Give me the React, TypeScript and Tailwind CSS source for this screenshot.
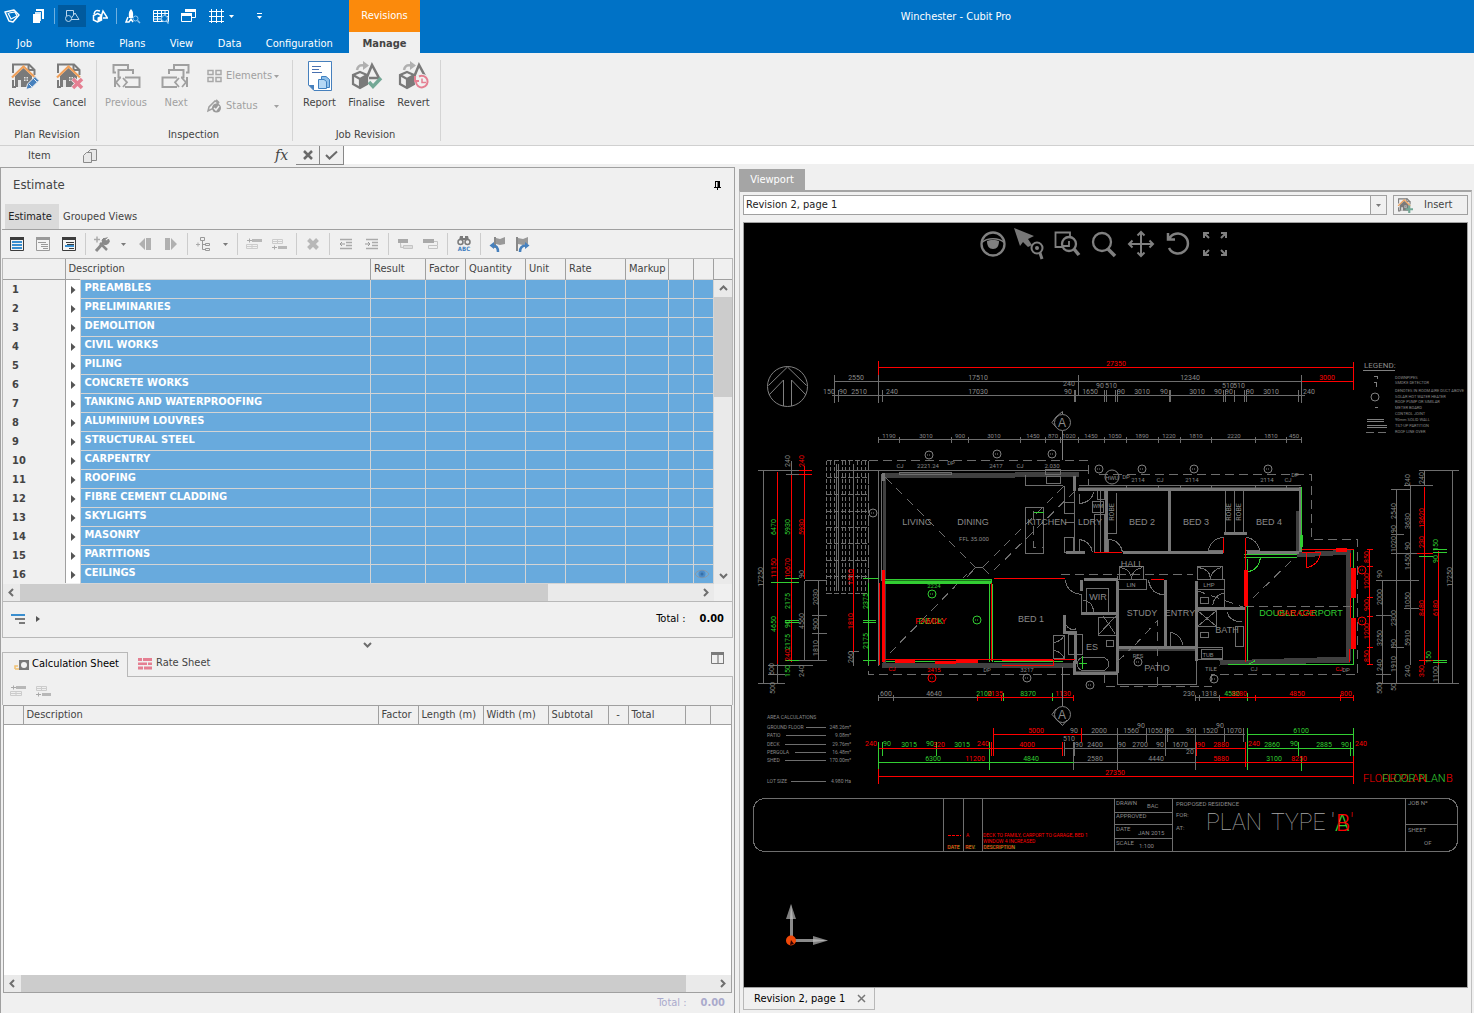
import { Fragment, type ReactNode } from 'react';

const G = '#7a7a7a';
const B = '#3a8fd0';

type IconProps = { w?: number; h?: number; children: ReactNode };

function Icon({ w = 16, h = 16, children }: IconProps) {
  return (
    <svg width={w} height={h} viewBox={`0 0 ${w} ${h}`} fill="none" aria-hidden="true">
      {children}
    </svg>
  );
}

function Caret({ color = G }: { color?: string }) {
  return (
    <Icon w={5} h={3}>
      <path d="M0 0H5L2.500 3Z" fill={color} />
    </Icon>
  );
}

function Chevron({ dir, color = '#6e6e6e' }: { dir: 'up' | 'down' | 'left' | 'right'; color?: string }) {
  const d = {
    up: 'M1 6L4.5 2.5L8 6',
    down: 'M1 3L4.5 6.5L8 3',
    left: 'M6 1L2.5 4.5L6 8',
    right: 'M3 1L6.5 4.5L3 8',
  }[dir];
  return (
    <Icon w={9} h={9}>
      <path d={d} stroke={color} strokeWidth="2" />
    </Icon>
  );
}

/* ---------- ribbon icons ---------- */

function HousePage({ size = 30, children }: { size?: number; children?: ReactNode }) {
  return (
    <svg width={size} height={size} viewBox="0 0 30 30" fill="none" aria-hidden="true">
      <path d="M3 12V3.500H19L24.500 9V14M3 19V26H6" stroke={G} strokeWidth="2" />
      <path d="M18.500 3V9H25" stroke={G} strokeWidth="2" />
      <path d="M5 15L13.500 7L22 15V26H5Z" fill={G} />
      <path d="M8 19H11V26H8ZM14 16H18V20H14Z" fill="#e4e4e4" />
      <path d="M16 16V20M14 18H18" stroke={G} />
      <path d="M2 16.500L13.500 5.500L25 16.500" stroke="#f0a05a" strokeWidth="2.200" />
      {children}
    </svg>
  );
}

function ReviseIcon() {
  return (
    <HousePage>
      <path d="M16 28.500L17.500 23L25 15.500L29 19.500L21.500 27Z" fill="#4680bd" stroke="#f0f0f0" />
      <path d="M19 23L22 26M23.500 17.500L27 21" stroke="#dfe8f2" />
    </HousePage>
  );
}

function CancelIcon() {
  return (
    <HousePage>
      <path d="M18 18L27 27M27 18L18 27" stroke="#f0f0f0" strokeWidth="5" />
      <path d="M18 18L27 27M27 18L18 27" stroke="#e57f92" strokeWidth="3.500" />
    </HousePage>
  );
}

function StepIcon({ flip }: { flip?: boolean }) {
  return (
    <Icon w={30} h={30}>
      <g transform={flip ? 'matrix(-1 0 0 1 30 0)' : undefined} stroke="#a0a0a0" strokeWidth="2">
        <path d="M5 11.500H2.500V4H17V8" />
        <path d="M10 16.500H7.500V9H22V13" />
        <path d="M4 16V26M14 16.500H28.500V26H14" />
        <path d="M9 17L5 21.300L9 26M12 17L16 21.300L12 26" strokeWidth="1.800" />
      </g>
    </Icon>
  );
}

function ElementsIcon() {
  return (
    <Icon w={16} h={14}>
      <path d="M1 1.500H6V5.500H1ZM9 1.500H14V5.500H9ZM1 8.500H6V12.500H1ZM9 8.500H14V12.500H9Z" stroke="#a8a8a8" strokeWidth="1.500" />
    </Icon>
  );
}

function StatusIcon() {
  return (
    <Icon w={16} h={14}>
      <path d="M1 12L2 8L8 2L11 4L5 10Z" stroke="#a0a0a0" strokeWidth="1.500" />
      <circle cx="9.500" cy="9" r="4.500" fill="#999" />
      <path d="M7 9l2 2 3-4" stroke="#f0f0f0" strokeWidth="1.500" />
      <path d="M9 1l3 3" stroke="#a0a0a0" strokeWidth="2" />
    </Icon>
  );
}

function ReportIcon() {
  return (
    <Icon w={26} h={30}>
      <path d="M1.500 .5H24.500V29.500H7L1.500 24Z" fill="#fff" stroke="#4680bd" />
      <path d="M1.500 24H7V29.500Z" fill="#4680bd" />
      <path d="M5 5.500H14M5 8.500H12M5 11.500H15" stroke="#4870b0" />
      <path d="M14.500 15.500H19L22.500 18.500V26.500H14.500Z" fill="#8fc0ea" stroke="#3f80c0" />
      <path d="M11.500 18.500H17L19.500 20.500V27.500H11.500Z" fill="#b5d8f5" stroke="#3f80c0" />
    </Icon>
  );
}

function ShapesIcon({ children }: { children: ReactNode }) {
  return (
    <Icon w={32} h={30}>
      <path d="M6 9C7 4 10 4 13 4.500" stroke="#b0b0b0" strokeWidth="2.500" />
      <path d="M12 0L18 4.500L12 9Z" fill="#b0b0b0" />
      <path d="M16 16L21 4L28 17H18" stroke={G} strokeWidth="2.500" />
      <path d="M9 11L16 14V23L9 27L2 23V14Z" fill="#f0f0f0" stroke={G} strokeWidth="2.200" />
      <path d="M2 14L9 18L16 14M9 18V27" stroke={G} strokeWidth="2.200" />
      <path d="M9 18L16 14V23L9 27Z" fill={G} />
      {children}
    </Icon>
  );
}

function FinaliseIcon() {
  return (
    <ShapesIcon>
      <path d="M18 21L22 25.500L30 17" stroke="#73a896" strokeWidth="3.500" />
    </ShapesIcon>
  );
}

function RevertIcon() {
  return (
    <ShapesIcon>
      <circle cx="24" cy="20.500" r="7.500" fill="#f0f0f0" />
      <path d="M18 20.500A5.800 5.800 0 1 0 21 15.500M17 15V20H21" stroke="#e57f92" strokeWidth="2" />
      <path d="M24 17.500V21.500H28" stroke="#e57f92" strokeWidth="1.500" />
    </ShapesIcon>
  );
}

/* ---------- title bar icons ---------- */

function LogoIcon() {
  return (
    <Icon>
      <path d="M1 4L10 2L15 7L9 14L5 13L1 4Z" stroke="#fff" strokeWidth="1.500" strokeLinejoin="round" />
      <path d="M4 5L7 11L13 8M5 5L11 4L13 8" stroke="#fff" strokeWidth="1.200" />
    </Icon>
  );
}

function PagesIcon() {
  return (
    <Icon w={14} h={14}>
      <path d="M4 0H12V10H4Z" fill="#fff" />
      <path d="M2.500 2.500H9.500V12.500H2.500Z" fill="#d8e8f6" stroke="#0072c6" />
      <path d="M1 5H8V14H1Z" fill="#fff" />
    </Icon>
  );
}

function CopyItemIcon() {
  return (
    <Icon w={14} h={14}>
      <path d="M7.500 .5H13.500V11.500H4.500V3.500Z" fill="#e8e8e8" stroke="#8a8a8a" />
      <path d="M3.500 3.500H8.500V13.500H.5V6.500Z" fill="#e8e8e8" stroke="#8a8a8a" />
    </Icon>
  );
}

function CubeConeIcon({ solid }: { solid?: boolean }) {
  return (
    <Icon>
      {solid ? (
        <>
          <path d="M2 6C3 2 5 2 8 3M9 9L11 3L15.500 10H11" stroke="#fff" strokeWidth="1.500" />
          <path d="M5.500 5.500L9.500 7.500V12L5.500 14L1.500 12V7.500Z" stroke="#fff" strokeWidth="1.500" />
          <path d="M5.500 9.500L9.500 7.500V12L5.500 14Z" fill="#fff" />
        </>
      ) : (
        <>
          <path d="M2.500 2.500H9.500V7M7 11.500H15L11 5L7.500 10" stroke="#b9d6ee" />
          <circle cx="4.500" cy="10.500" r="3" stroke="#b9d6ee" />
          <path d="M2.500 2.500V8" stroke="#b9d6ee" />
        </>
      )}
    </Icon>
  );
}

function RocketIcon() {
  return (
    <Icon>
      <path d="M6 1C9 4 8 7 8 10H4C4 7 3 4 6 1Z" fill="#fff" />
      <path d="M3 9L1 14H4L6 11L8 14" stroke="#fff" strokeWidth="1.500" />
      <circle cx="10.500" cy="10.500" r="2.500" stroke="#8fc4ee" />
      <path d="M12.500 12.500L15 15" stroke="#8fc4ee" strokeWidth="1.500" />
    </Icon>
  );
}

function SheetIcon() {
  return (
    <Icon>
      <path d="M.5 2.500H15.500V13.500H.5ZM.5 5.500H15.500M.5 8.500H15.500M.5 11H15.500M4.500 2V14M8.500 2V14M12 2V14" stroke="#fff" />
      <circle cx="11.500" cy="10.500" r="3" fill="#0072c6" stroke="#8fc4ee" />
      <path d="M13.500 12.500L15.500 15.500" stroke="#8fc4ee" strokeWidth="1.500" />
    </Icon>
  );
}

function WindowsIcon() {
  return (
    <Icon>
      <path d="M4 1.500H14.500V9.500H11M.5 5.500H10.500V13.500H.5Z" stroke="#fff" />
      <path d="M4 1H15V4H4ZM0 5H11V8H0Z" fill="#fff" />
    </Icon>
  );
}

function GridIcon() {
  return (
    <Icon>
      <path d="M3.500 1V15M8.500 1V15M13.500 1V15M1 3.500H16M1 8.500H16M1 13.500H16" stroke="#fff" />
    </Icon>
  );
}

/* ---------- panel toolbar icons ---------- */

function ListIcon({ kind }: { kind: 'all' | 'dim' | 'indent' }) {
  const frame = kind === 'dim' ? '#9a9a9a' : '#3c3c3c';
  return (
    <Icon w={14} h={14}>
      <path d="M.5 1H13.500V13.500H.5Z" fill="#f4f4f4" stroke={frame} />
      <path d="M0 0H14V3H0Z" fill={frame} />
      {kind === 'all' && <path d="M2 5H12M2 8H12M2 11H12" stroke={B} strokeWidth="2" />}
      {kind === 'dim' && <path d="M2 5.500H10M5 7.500H12M5 9.500H12M7 11.500H12" stroke="#9a9a9a" />}
      {kind === 'indent' && (
        <>
          <path d="M4 5.500H12M5 7.500H12M7 11.500H12" stroke={frame} />
          <path d="M3 9H12" stroke={B} strokeWidth="2" />
        </>
      )}
    </Icon>
  );
}

function ToolsIcon() {
  return (
    <Icon>
      <path d="M2 15L10 6" stroke="#8a8a8a" strokeWidth="3" />
      <path d="M13.500 1.500L11 3.500L12.500 5L14.500 3A3.500 3.500 0 1 1 10 2" fill="#8a8a8a" stroke="#8a8a8a" />
      <path d="M6 7L13 14" stroke="#8a8a8a" strokeWidth="2.500" />
      <path d="M0 3.500H6M3 .5V6.500" stroke="#aaa" strokeWidth="1.500" />
    </Icon>
  );
}

function PlayIcon({ back }: { back?: boolean }) {
  return (
    <Icon w={14} h={12}>
      <g transform={back ? 'matrix(-1 0 0 1 14 0)' : undefined} fill="#b0b0b0">
        <path d="M1 0H6V12H1ZM7 0L13 6L7 12Z" />
      </g>
    </Icon>
  );
}

function TreeIcon() {
  return (
    <Icon>
      <path d="M4.500 1.500H8.500V4.500H4.500ZM9.500 7.500H13.500V9.500H9.500ZM9.500 12.500H13.500V14.500H9.500ZM6.500 5V13.500H9M6.500 8.500H9" stroke="#999" />
      <path d="M0 8.500H4M2 6.500V10.500" stroke="#aaa" />
    </Icon>
  );
}

function RowIcon({ below }: { below?: boolean }) {
  return (
    <Icon w={16} h={12}>
      {below ? (
        <>
          <path d="M.5 1.500H10.500V5.500H.5ZM.5 3.500H10.500M5.500 1V6" stroke="#ccc" />
          <path d="M6 8H15V11H6Z" fill="#b8b8b8" />
          <path d="M0 9.500H5M2.500 7.500V11.500" stroke="#aaa" />
        </>
      ) : (
        <>
          <path d="M6 1H16V4H6Z" fill="#b8b8b8" />
          <path d="M1 2.500H6M3.500 .5V4.500" stroke="#aaa" />
          <path d="M.5 6.500H11.500V10.500H.5ZM.5 8.500H11.500M6 6V11" stroke="#ccc" />
        </>
      )}
    </Icon>
  );
}

function DeleteIcon() {
  return (
    <Icon w={12} h={12}>
      <path d="M1.500 1.500L10.500 10.500M10.500 1.500L1.500 10.500" stroke="#b8b8b8" strokeWidth="4" />
    </Icon>
  );
}

function IndentIcon({ out }: { out?: boolean }) {
  return (
    <Icon w={14} h={12}>
      <path d="M1 1.500H13M7 4.500H13M7 7.500H13M1 10.500H13" stroke="#aaa" strokeWidth="1.500" />
      <path d={out ? 'M6 6H1M3 4L1 6L3 8' : 'M0 6H5M3 4L5 6L3 8'} stroke="#999" />
    </Icon>
  );
}

function LinkRowsIcon({ alt }: { alt?: boolean }) {
  return (
    <Icon w={16} h={12}>
      <path d={alt ? 'M0 1H11V5H0Z' : 'M1 1H11V5H1Z'} fill="#a9a9a9" />
      <path
        d={alt ? 'M5.5 7.5H14.5V10.5H5.5ZM11 3.5H14.5V7' : 'M6.5 7.5H15.5V10.5H6.5ZM3.5 5V9.5H6'}
        fill={alt ? 'none' : '#ddd'}
        stroke="#c4c4c4"
      />
    </Icon>
  );
}

function FindIcon() {
  return (
    <svg width="16" height="16" viewBox="0 0 16 16" fill="none" aria-hidden="true">
      <path d="M4 0H7V2H9V0H12L13 4H3Z" fill={G} />
      <circle cx="4.500" cy="6" r="2.500" stroke={G} strokeWidth="1.500" />
      <circle cx="11.500" cy="6" r="2.500" stroke={G} strokeWidth="1.500" />
      <text x="8" y="15" textAnchor="middle" fontSize="6" fontWeight="700" fill="#3f80c0">ABC</text>
    </svg>
  );
}

function FlagIcon({ next }: { next?: boolean }) {
  return (
    <Icon>
      {next ? (
        <>
          <path d="M2 1V15" stroke="#888" strokeWidth="2" />
          <path d="M3 2L8 3L13 1V8L8 9L3 8Z" fill="#999" />
          <path d="M5 16C5 11 8 9.500 11 9.500" stroke="#4680bd" strokeWidth="2.500" />
          <path d="M10 6L14.500 9.500L10 13Z" fill="#4680bd" />
        </>
      ) : (
        <>
          <path d="M6 1V12" stroke="#888" strokeWidth="2" />
          <path d="M7 2L11 3L16 1V8L11 9L7 8Z" fill="#999" />
          <path d="M9 16C9 11 7 9.500 4 9.500" stroke="#4680bd" strokeWidth="2.500" />
          <path d="M5 6L.5 9.500L5 13Z" fill="#4680bd" />
        </>
      )}
    </Icon>
  );
}

function PinIcon() {
  return (
    <Icon w={7} h={9}>
      <path d="M1.500 0V6M1 .5H6M0 6.500H7M3.500 7V9" stroke="#000" />
      <path d="M3.500 0H6V6H3.500Z" fill="#000" />
    </Icon>
  );
}

/* ---------- header ---------- */

const menuTabs = [
  { name: 'Job', width: 'w-[49px]' },
  { name: 'Home', width: 'w-[63px]' },
  { name: 'Plans', width: 'w-[42px]' },
  { name: 'View', width: 'w-[57px]' },
  { name: 'Data', width: 'w-[40px]' },
  { name: 'Configuration', width: 'w-[100px]' },
];

function Header() {
  return (
    <header className="flex h-[53px] bg-[#0072c6] text-white">
      <div className="flex w-[349px] shrink-0 flex-col">
        <div className="flex h-8 items-center">
          <button className="flex w-6 justify-center" aria-label="Application menu"><LogoIcon /></button>
          <button className="flex w-[30px] justify-center" aria-label="Copy"><PagesIcon /></button>
          <span className="mr-[3px] h-4 w-px bg-[#6fb0e0]" />
          <button className="flex h-[22px] w-7 items-center justify-center bg-[#005a9e]" aria-label="2D view"><CubeConeIcon /></button>
          <button className="flex w-7 justify-center" aria-label="3D view"><CubeConeIcon solid /></button>
          <span className="mx-0.5 h-4 w-px bg-[#6fb0e0]" />
          <button className="flex w-7 justify-center" aria-label="Launch"><RocketIcon /></button>
          <button className="flex w-7 justify-center" aria-label="Worksheet"><SheetIcon /></button>
          <button className="flex w-7 justify-center" aria-label="Windows"><WindowsIcon /></button>
          <button className="flex w-[26px] justify-center" aria-label="Grid"><GridIcon /></button>
          <Caret color="#fff" />
          <button className="ml-[23px] flex flex-col items-center gap-0.5" aria-label="Customise toolbar">
            <span className="h-px w-[5px] bg-white" />
            <Caret color="#fff" />
          </button>
        </div>
        <nav className="flex h-[21px] items-center pt-1">
          {menuTabs.map(tab => (
            <a key={tab.name} href="#" className={`${tab.width} text-center whitespace-nowrap`}>
              {tab.name}
            </a>
          ))}
        </nav>
      </div>
      <div className="flex w-[71px] shrink-0 flex-col text-center">
        <div className="flex h-8 items-center justify-center bg-[#fb8a0c]">Revisions</div>
        <a href="#" className="flex h-[21px] items-center justify-center bg-[#f0f0f0] pt-1 font-bold text-[#444]">
          Manage
        </a>
      </div>
      <h1 className="flex h-8 flex-1 items-center justify-center pt-0.5 pl-[18px]">Winchester - Cubit Pro</h1>
    </header>
  );
}

interface RibbonButtonProps {
  label: string;
  icon: ReactNode;
  disabled?: boolean;
  width?: string;
}

function RibbonButton({ label, icon, disabled, width = 'w-[45px]' }: RibbonButtonProps) {
  return (
    <button disabled={disabled} className={`flex ${width} flex-col items-center ${disabled ? 'text-[#a0a0a0]' : ''}`}>
      <span className="flex h-8 items-center justify-center">{icon}</span>
      <span className="mt-[3px] leading-4">{label}</span>
    </button>
  );
}

function RibbonGroup({ title, width, children }: { title: string; width: string; children: ReactNode }) {
  return (
    <section className={`${width} flex flex-col border-r border-[#d4d4d4]`}>
      <div className="flex h-[70px] items-start">{children}</div>
      <h2 className="pr-0.5 text-center leading-[13px]">{title}</h2>
    </section>
  );
}

function Ribbon() {
  return (
    <div className="flex h-[93px] border-b border-[#d0d0d0] pt-[7px] pb-1">
      <RibbonGroup title="Plan Revision" width="w-[97px]">
        <div className="flex pl-0.5">
          <RibbonButton label="Revise" icon={<ReviseIcon />} />
          <RibbonButton label="Cancel" icon={<CancelIcon />} />
        </div>
      </RibbonGroup>
      <RibbonGroup title="Inspection" width="w-[196px]">
        <div className="flex pl-1">
          <RibbonButton label="Previous" icon={<StepIcon />} width="w-[50px]" disabled />
          <RibbonButton label="Next" icon={<StepIcon flip />} width="w-[50px]" disabled />
        </div>
        <div className="flex flex-1 flex-col gap-3.5 pt-2 pr-[13px] pl-1.5 text-[#a0a0a0]">
          <button disabled className="flex h-4 items-center">
            <ElementsIcon />
            <span className="ml-[3px] flex-1 text-left">Elements</span>
            <Caret color="#a0a0a0" />
          </button>
          <button disabled className="flex h-4 items-center">
            <StatusIcon />
            <span className="ml-[3px] flex-1 text-left">Status</span>
            <Caret color="#a0a0a0" />
          </button>
        </div>
      </RibbonGroup>
      <RibbonGroup title="Job Revision" width="w-[148px]">
        <div className="flex pl-[3px]">
          <RibbonButton label="Report" icon={<ReportIcon />} width="w-[47px]" />
          <RibbonButton label="Finalise" icon={<FinaliseIcon />} width="w-[47px]" />
          <RibbonButton label="Revert" icon={<RevertIcon />} width="w-[47px]" />
        </div>
      </RibbonGroup>
    </div>
  );
}

function FormulaRow() {
  return (
    <div className="flex h-[21px] items-start">
      <label htmlFor="formula" className="w-[83px] shrink-0 pl-7 leading-5">Item</label>
      <button className="flex h-5 w-48 shrink-0 items-center" aria-label="Copy item">
        <CopyItemIcon />
      </button>
      <span className="w-[21px] shrink-0 font-['DejaVu_Serif','Liberation_Serif',serif] text-sm leading-[18px] italic">fx</span>
      <button className="flex h-[19px] w-6 shrink-0 items-center justify-center border-r border-b border-[#888]" aria-label="Reject">
        <Icon w={10} h={10}>
          <path d="M1 1L9 9M9 1L1 9" stroke="#6a6a6a" strokeWidth="2.500" />
        </Icon>
      </button>
      <button className="flex h-[19px] w-6 shrink-0 items-center justify-center border-r border-b border-[#888]" aria-label="Accept">
        <Icon w={13} h={10}>
          <path d="M1 5L4.500 8.500L12 1.500" stroke="#6a6a6a" strokeWidth="2" />
        </Icon>
      </button>
      <input id="formula" className="h-[18px] min-w-0 flex-1 bg-white px-1 outline-none" />
    </div>
  );
}

/* ---------- estimate panel ---------- */

const trades = [
  'PREAMBLES', 'PRELIMINARIES', 'DEMOLITION', 'CIVIL WORKS', 'PILING', 'CONCRETE WORKS',
  'TANKING AND WATERPROOFING', 'ALUMINIUM LOUVRES', 'STRUCTURAL STEEL', 'CARPENTRY', 'ROOFING',
  'FIBRE CEMENT CLADDING', 'SKYLIGHTS', 'MASONRY', 'PARTITIONS', 'CEILINGS',
];

const toolbar: { label: string; icon: ReactNode; caret?: boolean; end?: boolean }[] = [
  { label: 'Show all', icon: <ListIcon kind="all" /> },
  { label: 'Show headings', icon: <ListIcon kind="dim" /> },
  { label: 'Show details', icon: <ListIcon kind="indent" />, end: true },
  { label: 'Tools', icon: <ToolsIcon />, caret: true },
  { label: 'Previous item', icon: <PlayIcon back /> },
  { label: 'Next item', icon: <PlayIcon />, end: true },
  { label: 'Add child', icon: <TreeIcon />, caret: true, end: true },
  { label: 'Insert above', icon: <RowIcon /> },
  { label: 'Insert below', icon: <RowIcon below />, end: true },
  { label: 'Delete', icon: <DeleteIcon />, end: true },
  { label: 'Outdent', icon: <IndentIcon out /> },
  { label: 'Indent', icon: <IndentIcon />, end: true },
  { label: 'Link', icon: <LinkRowsIcon /> },
  { label: 'Unlink', icon: <LinkRowsIcon alt />, end: true },
  { label: 'Find', icon: <FindIcon />, end: true },
  { label: 'Previous flag', icon: <FlagIcon /> },
  { label: 'Next flag', icon: <FlagIcon next /> },
];

function EyeIcon() {
  return (
    <Icon w={16} h={12}>
      <path d="M1 6C4 1 12 1 15 6C12 11 4 11 1 6Z" stroke="#8a98a5" />
      <circle cx="8" cy="6" r="3.500" fill="#4d8cc8" />
      <circle cx="8" cy="6" r="1.500" fill="#3670a8" />
    </Icon>
  );
}

function EstimateTable() {
  return (
    <div className="flex">
      <div className="min-w-0 flex-1">
        <table className="w-full table-fixed border-collapse">
          <colgroup>
            <col className="w-[62px]" />
            <col className="w-[15px]" />
            <col />
            <col className="w-[55px]" />
            <col className="w-[40px]" />
            <col className="w-[60px]" />
            <col className="w-[40px]" />
            <col className="w-[60px]" />
            <col className="w-[43px]" />
            <col className="w-[25px]" />
            <col className="w-[20px]" />
          </colgroup>
          <thead>
            <tr className="h-5 border-b border-[#a0a0a0] text-left">
              <th className="border-r border-[#a0a0a0]" />
              <th colSpan={2} className="border-r border-[#a0a0a0] px-[3px] font-normal">Description</th>
              {['Result', 'Factor', 'Quantity', 'Unit', 'Rate', 'Markup', '', ''].map((name, i) => (
                <th key={i} className="border-r border-[#a0a0a0] px-[3px] font-normal whitespace-nowrap">{name}</th>
              ))}
            </tr>
          </thead>
          <tbody>
            {trades.map((trade, i) => (
              <tr key={trade} className="h-[19px] font-bold">
                <td className="border-r border-[#a0a0a0] pt-0.5 pl-[9px] leading-4">{i + 1}</td>
                <td className="bg-white pt-0.5 pl-[5px]">
                  <Icon w={5} h={8}>
                    <path d="M0 0L4.500 4L0 8Z" fill="#555" />
                  </Icon>
                </td>
                <td className="border border-[#d4d4d4] bg-[#68aadd] pb-0.5 pl-1 leading-4 whitespace-nowrap text-white">{trade}</td>
                {Array.from({ length: 8 }, (_, c) => (
                  <td key={c} className={`border border-[#d4d4d4] bg-[#68aadd] ${c === 6 ? 'border-l-[#a0a0a0]' : ''}`}>
                    {i === trades.length - 1 && c === 7 && <EyeIcon />}
                  </td>
                ))}
              </tr>
            ))}
          </tbody>
        </table>
      </div>
      <div className="flex w-[18px] shrink-0 flex-col">
        <div className="h-[21px] border-b border-[#a0a0a0]" />
        <button className="flex h-[17px] items-center justify-center bg-[#eaeaea]" aria-label="Scroll up"><Chevron dir="up" /></button>
        <div className="flex-1 bg-[#eaeaea]"><div className="h-[100px] bg-[#ccc]" /></div>
        <button className="flex h-[17px] items-center justify-center bg-[#eaeaea]" aria-label="Scroll down"><Chevron dir="down" /></button>
      </div>
    </div>
  );
}

function HScroll({ thumb, gap }: { thumb: string; gap?: boolean }) {
  return (
    <div className="flex h-[17px] bg-[#eaeaea]">
      <button className="flex w-[17px] items-center justify-center" aria-label="Scroll left"><Chevron dir="left" /></button>
      <div className="flex-1"><div className={`h-full bg-[#ccc] ${thumb}`} /></div>
      <button className="flex w-[17px] items-center justify-center" aria-label="Scroll right"><Chevron dir="right" /></button>
      {gap && <span className="w-[18px] bg-[#f0f0f0]" />}
    </div>
  );
}

function CalculationSheet() {
  const columns = ['', 'Description', 'Factor', 'Length (m)', 'Width (m)', 'Subtotal', '-', 'Total', '', ''];
  return (
    <section className="flex flex-1 flex-col px-px">
      <div className="flex h-[25px]">
        <button className="flex w-[126px] items-center border border-b-0 border-[#b8b8b8] pl-[11px] text-black">
          <Icon w={16} h={10}>
            <path d="M1 9V6H4M1 9H5" stroke="#f0c070" strokeWidth="1.500" />
            <path d="M5 0H15V10H5Z" fill={G} />
            <circle cx="10" cy="5" r="3" fill="#f4f4f4" />
          </Icon>
          <span className="ml-0.5 whitespace-nowrap">Calculation Sheet</span>
        </button>
        <button className="flex flex-1 items-center border-b border-[#b8b8b8] pl-2.5">
          <Icon w={15} h={12}>
            <path d="M0 0H4V3H0ZM5 0H14V3H5ZM0 4.500H9V7H0ZM10 4.500H14V7H10ZM0 8.500H5V11.500H0ZM6 8.500H14V11.500H6Z" fill="#e57f92" />
          </Icon>
          <span className="ml-[3px]">Rate Sheet</span>
        </button>
        <button className="flex w-7 items-start border-b border-[#b8b8b8] pl-1.5" aria-label="Split view">
          <Icon w={13} h={12}>
            <path d="M0 0H13V3H0Z" fill={G} />
            <path d="M.5 0V11.500H13M12.500 0V11" stroke={G} />
            <path d="M7 3V11" stroke="#aaa" strokeWidth="2" />
          </Icon>
        </button>
      </div>
      <div className="flex h-7 items-center border-x border-[#b8b8b8]">
        <button className="flex w-[26px] justify-center pl-1" aria-label="Insert row above"><RowIcon /></button>
        <button className="flex w-[26px] justify-center pl-1" aria-label="Insert row below"><RowIcon below /></button>
      </div>
      <div className="mx-px flex flex-1 flex-col border border-[#a0a0a0] bg-white">
        <table className="w-full table-fixed border-collapse">
          <colgroup>
            <col className="w-[19px]" />
            <col />
            <col className="w-[40px]" />
            <col className="w-[65px]" />
            <col className="w-[65px]" />
            <col className="w-[60px]" />
            <col className="w-[20px]" />
            <col className="w-[57px]" />
            <col className="w-[25px]" />
            <col className="w-[21px]" />
          </colgroup>
          <thead>
            <tr className="h-[19px] border-b border-[#a0a0a0] bg-[#f0f0f0] text-left">
              {columns.map((name, i) => (
                <th
                  key={i}
                  className={`px-[3px] font-normal whitespace-nowrap ${i === columns.length - 1 ? '' : 'border-r border-[#a0a0a0]'} ${name === '-' ? 'text-center' : ''}`}
                >
                  {name}
                </th>
              ))}
            </tr>
          </thead>
        </table>
        <div className="flex-1" />
        <HScroll thumb="w-[96%]" />
      </div>
      <div className="flex h-5 items-center justify-end gap-3.5 pt-px pr-2 text-[#aaaacc]">
        <span>Total :</span>
        <b>0.00</b>
      </div>
    </section>
  );
}

function EstimatePanel() {
  return (
    <div className="pr-0.5">
      <div className="flex h-full flex-col border border-b-0 border-[#a0a0a0]">
        <div className="flex h-9 items-center justify-between px-[13px] pb-0.5">
          <h2 className="-ml-px text-[13px]">Estimate</h2>
          <button aria-label="Pin panel"><PinIcon /></button>
        </div>
        <div className="mx-px flex h-[26px] border-b border-[#a0a0a0] pl-[3px]">
          <button className="w-[54px] bg-[#dadada] pt-0.5 pr-1 text-[#222]">Estimate</button>
          <button className="ml-1 pt-0.5">Grouped Views</button>
        </div>
        <div className="flex h-7 items-center pl-[3px]">
          {toolbar.map(tool => (
            <Fragment key={tool.label}>
              <button className="flex w-[26px] justify-center" aria-label={tool.label}>{tool.icon}</button>
              {tool.caret && <button className="flex w-[17px] justify-center" aria-label={`${tool.label} menu`}><Caret /></button>}
              {tool.end && <span className="mx-[3px] h-[22px] w-px bg-[#ccc]" />}
            </Fragment>
          ))}
        </div>
        <div className="mx-px border border-[#b8b8b8]">
          <EstimateTable />
          <HScroll thumb="w-[78%]" gap />
          <div className="flex h-9 items-center border-t border-[#b8b8b8] pr-2 pl-2">
            <button aria-label="Outline">
              <Icon w={15} h={10}>
                <path d="M0 1H14" stroke={B} strokeWidth="2" />
                <path d="M4 5H14M8 9H14" stroke={G} strokeWidth="2" />
              </Icon>
            </button>
            <button className="ml-2.5" aria-label="Expand outline">
              <Icon w={5} h={8}><path d="M0 1L4 4L0 7Z" fill="#555" /></Icon>
            </button>
            <div className="flex flex-1 justify-end gap-3.5 text-black">
              <span>Total :</span>
              <b>0.00</b>
            </div>
          </div>
        </div>
        <button className="flex h-3.5 items-center justify-center" aria-label="Collapse"><Chevron dir="down" /></button>
        <CalculationSheet />
      </div>
    </div>
  );
}

/* ---------- drawing ---------- */

const GREY = '#6e6e6e';
const RED = '#ff0000';
const GREEN = '#32cd32';
const WALL = '#404040';

type Label = [x: number, y: number, text: string, color?: string];

const dims: Label[] = [
  [1116, 366, '27350', RED], [1327, 380, '3000', RED], [856, 380, '2550'], [978, 380, '17510'], [1190, 380, '12340'],
  [829, 394, '150'], [843, 394, '90'], [859, 394, '2510'], [892, 394, '240'], [978, 394, '17030'], [1068, 394, '90'],
  [1069, 386, '240'], [1090, 394, '1650'], [1100, 388, '90'], [1111, 388, '510'], [1121, 394, '90'], [1142, 394, '3010'],
  [1164, 394, '90'], [1197, 394, '3010'], [1218, 394, '90'], [1229, 394, '90'], [1228, 388, '510'], [1239, 388, '510'],
  [1250, 394, '90'], [1271, 394, '3010'], [1309, 394, '240'],
  [886, 696, '600'], [934, 696, '4640'], [984, 696, '2100', GREEN], [995, 696, '2135', RED], [1028, 696, '8370', GREEN],
  [1063, 696, '1130', RED], [1189, 696, '230'], [1209, 696, '1318'], [1232, 696, '4580', GREEN], [1239, 696, '3280', RED],
  [1297, 696, '4850', RED], [1346, 696, '800', RED],
  [1036, 733, '5000', RED], [1074, 733, '90'], [1099, 733, '2000'], [1131, 733, '1560'], [1141, 728, '90'], [1155, 733, '1050'],
  [1170, 733, '90'], [1190, 733, '90'], [1210, 733, '1520'], [1220, 728, '90'], [1234, 733, '1070'], [1301, 733, '6100', GREEN],
  [871, 746, '240', RED], [887, 746, '90', GREEN], [909, 747, '3015', GREEN], [930, 746, '90', GREEN], [939, 747, '320', RED],
  [962, 747, '3015', GREEN], [983, 746, '240', RED], [1027, 747, '4000', RED], [1069, 741, '510'], [1079, 747, '90'],
  [1095, 747, '2400'], [1122, 747, '90'], [1140, 747, '2700'], [1160, 747, '90'], [1180, 747, '1670'], [1190, 754, '20'],
  [1201, 747, '90', RED], [1221, 747, '2880', RED], [1254, 746, '240', RED], [1272, 747, '2860', GREEN], [1294, 746, '90', GREEN],
  [1324, 747, '2885', GREEN], [1345, 747, '90', GREEN], [1361, 746, '240', RED],
  [933, 761, '6300', GREEN], [975, 761, '11200', RED], [1031, 761, '4840', GREEN], [1095, 761, '2580'], [1156, 761, '4440'],
  [1221, 761, '5880', RED], [1274, 761, '3100', GREEN], [1299, 761, '8250', RED], [1115, 775, '27350', RED],
];

const smallDims: Label[] = [
  [889, 438, '1190'], [926, 438, '3010'], [960, 438, '900'], [994, 438, '3010'], [1033, 438, '1450'], [1053, 438, '870'],
  [1069, 438, '1020'], [1091, 438, '1450'], [1115, 438, '1050'], [1142, 438, '1890'], [1169, 438, '1220'], [1196, 438, '1810'],
  [1234, 438, '2220'], [1271, 438, '1810'], [1294, 438, '450'], [928, 468, '2221.24'], [996, 468, '2417'], [1052, 468, '2.030'],
  [1138, 482, '2114'], [1192, 482, '2114'], [1267, 482, '2114'], [900, 468, 'CJ'], [951, 465, 'DP'], [1020, 468, 'CJ'],
  [1126, 479, 'DP'], [1160, 482, 'CJ'], [1288, 482, 'CJ'], [1295, 477, 'DP'], [1112, 480, 'HWU'], [892, 671, 'CJ', RED],
  [934, 672, '2415', RED], [987, 672, 'DP'], [1027, 672, '3217'], [1254, 671, 'CJ'], [1339, 671, 'CJ', RED], [1346, 672, 'DP'],
  [934, 588, '2224', GREEN], [1138, 658, 'RES'], [1211, 671, 'TILE'], [1208, 657, 'TUB'], [1131, 587, 'LIN'],
  [1209, 587, 'LHP'], [1098, 508, 'WM'],
];

const verticalDims: Label[] = [
  [790, 461, '240'], [804, 461, '240', RED], [776, 527, '6470', GREEN], [790, 527, '5930', GREEN], [804, 527, '5930', RED],
  [776, 568, '11150', RED], [790, 568, '10670', RED], [804, 574, '90'], [763, 577, '17250'], [818, 597, '2030'],
  [790, 601, '2175', GREEN], [790, 624, '90', GREEN], [776, 624, '4650', GREEN], [804, 621, '4560'], [818, 624, '900'],
  [790, 642, '2175', GREEN], [818, 648, '1810'], [790, 655, '240', RED], [774, 669, '600'], [790, 671, '150', GREEN],
  [804, 671, '240'], [775, 688, '500'], [868, 601, '2375', GREEN], [868, 641, '2175', GREEN], [853, 621, '1810', RED],
  [853, 657, '260'], [853, 577, '1510', RED], [1396, 511, '2540'], [1396, 529, '90'], [1396, 544, '1020'],
  [1410, 480, '240'], [1424, 478, '240'], [1410, 521, '3630'], [1410, 546, '90'], [1424, 518, '13620', RED], [1424, 542, '230', RED],
  [1438, 545, '150', GREEN], [1438, 559, '90', GREEN], [1410, 562, '1450'], [1452, 577, '17250'], [1382, 574, '90'],
  [1382, 597, '2000'], [1396, 618, '2300'], [1410, 600, '1050'], [1424, 608, '8480', RED], [1438, 608, '6180', RED],
  [1382, 638, '3250'], [1410, 638, '5910'], [1396, 643, '90'], [1396, 664, '1910'], [1382, 665, '240'], [1410, 671, '240'],
  [1424, 671, '350', RED], [1438, 674, '1100'], [1431, 657, '150', GREEN], [1382, 688, '500'], [1396, 687, '50'],
  [1369, 557, '850', RED], [1369, 581, '1200', RED], [1369, 605, '900', RED], [1369, 631, '1200', RED], [1369, 656, '850', RED],
  [1114, 512, 'ROBE'], [1231, 512, 'ROBE'], [1241, 512, 'ROBE'],
];

const rooms: Label[] = [
  [917, 525, 'LIVING'], [973, 525, 'DINING'], [1047, 525, 'KITCHEN'], [1090, 525, 'LDRY'], [1142, 525, 'BED 2'], [1196, 525, 'BED 3'],
  [1269, 525, 'BED 4'], [1132, 567, 'HALL'], [1031, 622, 'BED 1'], [1098, 600, 'WIR'], [1092, 650, 'ES'], [1142, 616, 'STUDY'],
  [1180, 616, 'ENTRY'], [1227, 633, 'BATH'], [1157, 671, 'PATIO'], [931, 624, 'DECK', GREEN], [931, 624, 'FAMILY', RED],
  [1301, 616, 'DOUBLE CARPORT', GREEN], [1296, 616, 'GARAGE', RED],
];

const areas: [number, string, number, string][] = [
  [729, 'GROUND FLOOR', 805, '248.26m²'],
  [737, 'PATIO', 785, '9.08m²'],
  [746, 'DECK', 784, '29.76m²'],
  [754, 'PERGOLA', 794, '16.48m²'],
  [762, 'SHED', 784, '170.00m²'],
  [783, 'LOT SIZE', 790, '4.980 Ha'],
];

const legend: Label[] = [
  [1395, 379, 'DOWNPIPES'], [1395, 384, 'SMOKE DETECTOR'], [1395, 392, 'DENOTES IN ROOM AIRE DUCT ABOVE'],
  [1395, 398, 'SOLAR HOT WATER HEATER'], [1395, 403, 'ROOF PUMP OR SIMILAR'], [1395, 409, 'METER BOARD'],
  [1395, 415, 'CONTROL JOINT'], [1395, 421, '90mm SOLID WALL'], [1395, 427, 'TILT-UP PARTITION'], [1395, 433, 'ROOF LINE OVER'],
];

const titleBlock: Label[] = [
  [1116, 805, 'DRAWN'], [1147, 808, 'BAC'], [1116, 818, 'APPROVED'], [1116, 831, 'DATE'], [1138, 835, 'JAN 2015'],
  [1116, 845, 'SCALE'], [1139, 848, '1:100'], [1176, 806, 'PROPOSED RESIDENCE'], [1176, 817, 'FOR:'], [1176, 830, 'AT:'],
  [1408, 805, 'JOB Nº'], [1408, 832, 'SHEET'], [1424, 845, 'OF'],
];

const revisions: Label[] = [
  [966, 837, 'A', RED], [983, 837, 'DECK TO FAMILY, CARPORT TO GARAGE, BED 1', RED], [983, 843, 'WINDOW 4 INCREASED', RED],
  [948, 849, 'DATE', GREEN], [947, 849, 'DATE', RED], [966, 849, 'REV.', GREEN], [965, 849, 'REV.', RED],
  [984, 849, 'DESCRIPTION', GREEN], [983, 849, 'DESCRIPTION', RED],
];

function ticks(xs: number[], y1: number, y2: number) {
  return xs.map(x => `M${x} ${y1}V${y2}`).join('');
}

function sideTicks(ys: number[], x1: number, x2: number) {
  return ys.map(y => `M${x1} ${y}H${x2}`).join('');
}

const bubbles: [number, number, string?][] = [
  [929, 455], [997, 454], [1052, 454], [1099, 469], [1142, 469], [1194, 469], [1268, 469], [873, 513], [932, 594, GREEN],
  [977, 620, GREEN], [932, 678, RED], [1027, 678], [1090, 685], [1214, 679], [1138, 662], [1362, 621, RED], [1362, 570, RED],
];

function Labels({ items, size, anchor = 'middle' }: { items: Label[]; size: number; anchor?: 'middle' | 'start' }) {
  return (
    <g fontSize={size} textAnchor={anchor}>
      {items.map(([x, y, text, color], i) => (
        <text key={i} x={x} y={y} fill={color ?? '#8a8a8a'}>{text}</text>
      ))}
    </g>
  );
}

function FloorPlan() {
  const hatch = [826, 830, 834, 842, 845, 849, 857, 861, 865, 868];
  return (
    <svg viewBox="744 263 723 724" className="min-h-0 w-full flex-1 font-['Roboto','Liberation_Sans',sans-serif]" fill="none" role="img" aria-label="Floor plan">
      <g transform="translate(.5 .5)" shapeRendering="crispEdges">
        {/* walls */}
        <path d="M884 472H1014V477H884ZM1014 471H1078V476H1014ZM881 662H1074V667H881ZM1295 510H1299V551H1295ZM882 472H885V666H882ZM1078 486H1300V490H1078ZM1296 552L1350 549V554L1296 557ZM1345 553H1350V660H1345ZM1219 660L1349 656V662L1219 665ZM1117 646H1196V650H1117ZM1073 670H1117V674H1073Z" fill={WALL} />
        <g stroke={GREY}>
          <path d="M835 470H1088M878 470V665M881 473V580M899 472H951V474H899ZM1045 469H1060V474H1045ZM1025 474V485H1062M1046 476H1060V483H1046ZM1025 507H1043V553H1025ZM1064 485V502H1074M1064 502H1074V513H1064ZM1064 522H1074M1064 537H1073V552H1064ZM1074 486V552M1092 501H1103V512H1092ZM1094 514H1104V552H1094ZM1097 490H1104V499H1097Z" />
          <path d="M1126 485H1158V488H1126ZM1180 485H1211V488H1180ZM1255 485H1286V488H1255ZM1078 485H1300M1100 490V552M1116 492V533M1106 533H1116M1225 490V533M1243 490V533M1234 490V534" />
          <path d="M1086 588H1108V612H1086ZM1117 575V579H1146V589H1117M1119 566H1143V579H1119ZM1131 579C1131 572 1126 568 1120 567M1131 579C1131 572 1136 568 1142 567M1197 566H1222V579H1197ZM1210 579C1210 572 1205 568 1198 567M1210 579C1210 572 1216 568 1221 567M1196 579H1224V607" />
          <path d="M1197 610H1216V626H1197ZM1197 610L1216 626M1216 610L1197 626M1196 589H1224M1200 597H1208V603H1200ZM1200 632H1208V637H1200ZM1235 626H1243V646H1235ZM1197 647H1222V659H1197ZM1103 616L1115 634M1115 616L1098 634M1098 617H1116V635H1098ZM1106 640H1113V646H1106ZM1068 634H1082V654H1068ZM1053 635H1064V658H1053ZM1117 684H1196M1117 648V684M1196 648V684" />
          <path d="M1079 493V503C1086 503 1092 498 1093 492M1079 552V539C1086 540 1091 545 1092 552M1108 552V539C1116 539 1121 545 1122 552M1223 550H1208C1209 543 1215 537 1223 537M1245 550H1259C1258 543 1252 537 1245 537M1081 593V613M1082 600C1089 600 1093 605 1093 611M1064 619C1065 628 1072 631 1076 628M1065 580C1066 588 1072 593 1081 594M1170 647V632C1178 633 1182 640 1183 647M1148 580C1150 590 1156 594 1163 594M1052 642C1058 642 1062 638 1064 635M1052 650C1058 650 1062 654 1064 658M1212 605C1213 598 1218 593 1224 593M1227 611C1227 618 1235 622 1242 621" />
          <rect x="1077" y="657" width="31" height="13" rx="6" />
          <rect x="1201" y="649" width="21" height="9" />
        </g>
        <g stroke="#777" strokeWidth="3">
          <path d="M1074 475V490M1077 489H1300M1106 490V552M1169 490V552M1223 533H1246M1300 486V551M1065 552H1084M1122 552H1222M1246 552H1298M1074 552H1079M1081 579V590M1080 613H1117V672M1064 614V632H1075V662H1074V673H1117M1117 580V647M1165 579V647M1196 580V660M1117 647H1196M1196 608H1244M1083 579H1117M883 472V480" />
        </g>
        <path d="M836 463V590M838 463V590M853 463V590" stroke={GREY} />
        <path d={ticks(hatch, 460, 593)} stroke={GREY} strokeDasharray="4 2" />
        <path d={sideTicks([460, 477, 494, 511, 527, 543, 560, 576, 593], 826, 868)} stroke={GREY} strokeDasharray="5 2" />

        {/* roof line and ridges */}
        <path d="M868 460H1088V484M868 460V674H1080M1098 474H1311V539H1357V674H1211V686H1104V674M1060 574H1192M1244 606H1352" stroke={GREY} strokeDasharray="9 5" />
        <path d="M885 477L975 567M1063 486L982 567M1075 490L989 574M889 653L966 574M1117 661L1134 645M1134 645L1157 620V686M1196 590L1244 607M1252 598L1294 557M1033 510V547H1043" stroke={GREY} strokeDasharray="9 6" />
        <path d="M975 567H982L989 574M975 567L966 577" stroke={GREY} />

        {/* revised walls */}
        <path d="M884 578H991V583H884Z" fill={GREEN} />
        <path d="M989 583V661M992 583V661M1301 486V550M1243 554H1296M1243 557H1296M1247 558V660M1353 549V664M1227 664H1353M993 661H1062M1033 512H1043M885 661H935M1248 664L1255 660M862 578H878M1082 655V668M1078 663H1086" stroke={GREEN} />
        <path d="M1248 571C1256 570 1259 563 1260 557" stroke={GREEN} />
        <path d="M1299 534H1302V546H1299Z" fill={GREEN} />
        <path d="M884 580H990" stroke="#1c701c" />
        <path d="M881 569H884V661H881ZM1243 569H1247V605H1243ZM1350 567H1355V597H1350ZM1350 617H1355V648H1350ZM1335 547H1346V551H1335ZM894 659H914V662H894ZM934 660H955V663H934ZM955 659H977V662H955Z" fill={RED} />
        <path d="M879 582V664M991 582V660M993 578H1064M1053 659H1074M884 659H1052M1001 660H1053V665H1001M1093 552H1121M1223 537V552M1245 537V661M1301 549H1353M1350 552V566M1350 597V617M1349 648V661M1306 551V567C1314 566 1319 560 1320 552H1301M1150 579H1163" stroke={RED} />

        {/* horizontal dimension lines */}
        <path d={`M834 381H1301M831 395H1304M878 439H1301M878 697H977M1195 697H1219M1081 734H1244M1064 748H1195M1073 762H1195${ticks([834, 878, 1301], 374, 402)}${ticks([838, 882, 1074, 1075, 1104, 1106, 1115, 1117, 1169, 1170, 1223, 1225, 1234, 1244, 1246, 1298], 389, 401)}M1078 374V394${ticks([878, 899, 951, 968, 1020, 1045, 1060, 1078, 1104, 1126, 1158, 1180, 1211, 1255, 1286, 1301], 436, 442)}${ticks([878, 893, 1195, 1199, 1219], 694, 700)}${ticks([1117, 1146, 1165, 1167, 1195, 1224, 1243], 727, 741)}${ticks([1064, 1074, 1117, 1165], 741, 755)}${ticks([1073, 1117, 1195], 741, 769)}`} stroke={GREY} />
        <path d={`M1247 734H1353M1247 748H1353M878 762H1073${ticks([878, 989, 1247], 741, 769)}${ticks([882, 936, 1298, 1350], 741, 755)}M1247 727V741M1301 755V770M1353 727V755${ticks([1003, 1052, 1247], 692, 700)}`} stroke={GREEN} />
        <path d={`M878 367H1353M1301 381H1353M878 360V374M1353 361V389M977 697H1073M1219 697H1353M993 734H1081M878 748H1062M1195 748H1245M1195 762H1353M878 776H1353${ticks([977, 1001, 1073, 1255, 1340, 1353], 694, 700)}${ticks([993, 1081], 727, 741)}${ticks([991, 993, 1062, 1196, 1245], 741, 755)}M1245 755V766M878 768V783M1353 755V783`} stroke={RED} />

        {/* vertical dimension lines */}
        <path d={`M763 470V683M777 663V683M791 460V476M818 580V660M804 580V660M853 580V665M1452 470V683M1438 664V683M1410 485V664M1396 489V683M1382 580V683M1424 470V485M757 470H802M1418 470H1458M785 474H798M804 580H826M811 615H826M811 633H826M784 660H826M767 665H812M767 674H784M757 683H784M1390 489H1410M1403 485H1432M1390 534H1403M1390 553H1432M1375 580H1418M1375 615H1390M1403 608H1418M1390 647H1403M1375 674H1390M1375 683H1458M848 651H858`} stroke={GREY} />
        <path d="M777 471V663M791 474V661M804 465V578M853 568V651M1424 486V664M1438 550V664M1369 549V664M798 470H811M798 474H811M1416 553H1432M1418 660H1432" stroke={RED} />
        <path d={sideTicks([549, 566, 597, 616, 647, 664], 1366, 1372)} stroke={RED} />
        <path d="M770 582H798M784 578H798M784 620H798M784 622H798M784 660H798M868 582V664M862 620H875M862 622H875M862 660H875M1432 549H1446M1432 552H1446M1418 556H1432M1432 660H1446M1432 662H1446" stroke={GREEN} />

        {/* title block */}
        <rect x="753" y="798" width="704" height="53" rx="11" stroke={GREY} />
        <path d="M943 798V851M963 798V851M982 798V851M1114 798V851M1172 798V851M1405 798V851M1114 812H1172M1114 824H1172M1114 838H1172M1405 824H1457" stroke={GREY} />
        <path d="M947 835H960" stroke={RED} strokeDasharray="3 1" />

        {/* legend symbols */}
        <path d="M1362 370H1394M1366 419H1383M1366 421H1383M1366 425H1386M1366 427H1386M1373 376H1377V378M1373 382H1376V386M1374 407H1377" stroke="#808080" />
        <path d="M1365 432H1388" stroke={GREY} strokeDasharray="8 4" />
        {areas.map(([y, name, x]) => (
          <path key={name} d={`M${x} ${y - 2}H825`} stroke={GREY} />
        ))}
      </g>

      {/* north point and section markers */}
      <g stroke="#808080" strokeWidth="1">
        <circle cx="787.500" cy="386.500" r="20" />
        <path d="M768.500 385.500L787.500 367L806.500 385.500M783.500 406V380L769 395M791.500 406V380L806 395" />
        {[422.5, 714.5].map(y => (
          <g key={y}>
            <circle cx="1062.500" cy={y} r="8" />
            <path d={y < 500 ? 'M1056 417L1052 422.5L1056 427M1056 417L1062.5 411.5V414M1062.5 431V460' : 'M1056 709L1052 714.5L1062.5 725.5L1067 720M1062.5 706V667'} />
          </g>
        ))}
        <circle cx="1375" cy="397" r="4" />
        <circle cx="1112" cy="477" r="7" />
      </g>
      {bubbles.map(([x, y, color], i) => (
        <g key={i}>
          <circle cx={x} cy={y} r="4" stroke={color ?? '#808080'} />
          <path d={`M${x - 2} ${y}H${x + 2}`} stroke={color ?? '#808080'} strokeDasharray="1 1" />
        </g>
      ))}

      <Labels items={dims} size={7} />
      <Labels items={smallDims} size={6} />
      <g fontSize="7" textAnchor="middle">
        {verticalDims.map(([x, y, text, color], i) => (
          <text key={i} transform={`translate(${x} ${y}) rotate(-90)`} fill={color ?? '#8a8a8a'}>{text}</text>
        ))}
      </g>
      <g className="font-['Liberation_Sans',sans-serif]">
        <Labels items={rooms} size={9} />
        <Labels items={[[1062, 427, 'A'], [1062, 719, 'A']]} size={12} />
      </g>
      <Labels items={[[974, 541, 'FFL  35.000']]} size={6} />
      <Labels items={legend} size={4} anchor="start" />
      <Labels items={[[767, 719, 'AREA CALCULATIONS'], ...areas.map(([y, name]): Label => [767, y, name])]} size={5} anchor="start" />
      <Labels items={titleBlock} size={6} anchor="start" />
      <Labels items={revisions} size={5} anchor="start" />
      <g fontSize="5" textAnchor="end" fill="#8a8a8a">
        {areas.map(([y, name, , value]) => (
          <text key={name} x="851" y={y}>{value}</text>
        ))}
      </g>
      <g fontSize="11" fontWeight="300">
        <text x="1363" y="782" fill={RED}>FLOOR PLAN</text>
        <text x="1382" y="782" fill={GREEN}>FLOOR PLAN</text>
        <text x="1446" y="782" fill={RED}>B</text>
      </g>
      <text x="1364" y="368" fontSize="8" fill="#8a8a8a">LEGEND:</text>
      <g fontSize="23" fontWeight="100" fill="#a8a8a8">
        <text x="1206" y="830">PLAN</text>
        <text x="1271" y="830">TYPE</text>
        <text x="1331" y="830">'</text>
        <text x="1335" y="831" fill={GREEN} fontWeight="300">A</text>
        <text x="1336" y="831" fill={RED} fontWeight="300">B</text>
        <text x="1350" y="830" fill={RED}>'</text>
      </g>

      {/* axis gizmo */}
      <path d="M791.500 939V915M795 940.500H816" stroke="#8a8a8a" strokeWidth="3" />
      <path d="M786 919L791 904L796 919ZM813 936L828 940.500L813 945Z" fill="#808080" />
      <path d="M791 904L793 919H790ZM813 939L828 940.500L813 942Z" fill="#b0b0b0" />
      <circle cx="791" cy="940.500" r="5" fill="#f04808" />
      <path d="M790 945L791 940L794 944Z" fill="#300" />
    </svg>
  );
}

const viewTools: { label: string; icon: ReactNode }[] = [
  {
    label: 'Visibility',
    icon: (
      <>
        <circle cx="14" cy="14" r="11.500" />
        <path d="M3.500 12C8 7.500 20 7.500 24.500 12" strokeWidth="1.500" />
        <path d="M8 11C10 9.500 18 9.500 20 11C20 16 18 19 14 19C10 19 8 16 8 11Z" fill="#808080" stroke="none" />
      </>
    ),
  },
  {
    label: 'Select',
    icon: (
      <>
        <path d="M-2 -2L18 6L12 9L16 15L12 17L7 12L4 16Z" fill="#777" stroke="none" />
        <circle cx="21" cy="18" r="5.500" strokeWidth="2" />
        <circle cx="21" cy="18" r="2" fill="#808080" stroke="none" />
        <path d="M24 23L26 29" strokeWidth="3" />
      </>
    ),
  },
  {
    label: 'Zoom window',
    icon: (
      <>
        <path d="M10 17H2.500V2.500H17V7" strokeWidth="1.800" />
        <path d="M16 11V16H10" strokeWidth="1.800" />
        <circle cx="16" cy="14" r="7" />
        <path d="M21 19L26 25" strokeWidth="3.500" />
      </>
    ),
  },
  {
    label: 'Zoom',
    icon: (
      <>
        <circle cx="12" cy="12" r="9" />
        <path d="M18 19L25 26" strokeWidth="3.500" />
      </>
    ),
  },
  {
    label: 'Pan',
    icon: <path d="M14 2V26M2 14H26M10.500 5.500L14 2L17.500 5.500M10.500 22.500L14 26L17.500 22.500M5.500 10.500L2 14L5.500 17.500M22.500 10.500L26 14L22.500 17.500" strokeWidth="2" />,
  },
  { label: 'Reset rotation', icon: <path d="M4 3V9.500H11M5 9A10 10 0 1 1 5 18" strokeWidth="2.500" /> },
  {
    label: 'Fit',
    icon: <path d="M3 8V3H8M3 3L8 8M20 3H25V8M25 3L20 8M3 20V25H8M3 25L8 20M20 25H25V20M25 25L20 20" strokeWidth="2" />,
  },
];

function ViewportPanel() {
  return (
    <div className="flex flex-col px-0.5 pt-0.5">
      <div className="flex h-[21px]">
        <button className="w-[66px] bg-[#a5a5a5] pt-0.5 text-white">Viewport</button>
      </div>
      <div className="flex flex-1 flex-col border-x border-t-2 border-[#a5a5a5] border-x-[#c0c0c0] px-[3px] pt-[3px]">
        <div className="flex h-5 gap-1.5">
          <div className="flex flex-1 border border-[#a0a0a0] bg-white">
            <select aria-label="Page" className="min-w-0 flex-1 appearance-none bg-white pt-px pl-0.5 text-[#222] outline-none">
              <option>Revision 2, page 1</option>
            </select>
            <span className="pointer-events-none flex w-4 items-center justify-center border-l border-[#a0a0a0] bg-[#f0f0f0]"><Caret /></span>
          </div>
          <button className="flex w-[75px] items-center border border-[#a0a0a0] pl-[3px]">
            <HousePage size={16}>
              <path d="M23 16V30M16 23H30" stroke="#73a896" strokeWidth="4" />
            </HousePage>
            <span className="ml-[11px]">Insert</span>
          </button>
        </div>
        <div className="mt-[7px] flex flex-1 flex-col border border-[#a0a0a0] bg-black">
          <div className="flex h-10 shrink-0 justify-center pt-[7px] pr-1">
            {viewTools.map(tool => (
              <button key={tool.label} className="flex w-[37px] justify-center" aria-label={tool.label}>
                <svg width="28" height="28" viewBox="0 0 28 28" className="overflow-visible" fill="none" stroke="#808080" strokeWidth="2.300" aria-hidden="true">
                  {tool.icon}
                </svg>
              </button>
            ))}
          </div>
          <FloorPlan />
        </div>
        <div className="flex h-[25px] shrink-0 items-start">
          <div className="flex h-[22px] w-[132px] items-center border border-t-0 border-[#b8b8b8] pl-2.5 text-black">
            <span className="flex-1 pt-px whitespace-nowrap">Revision 2, page 1</span>
            <button className="mr-2" aria-label="Close page">
              <Icon w={9} h={9}>
                <path d="M1 1L8 8M8 1L1 8" stroke="#777" strokeWidth="1.500" />
              </Icon>
            </button>
          </div>
        </div>
      </div>
    </div>
  );
}

export default function App() {
  return (
    <div className="flex min-h-screen flex-col bg-[#f0f0f0] font-['DejaVu_Sans_Condensed','DejaVu_Sans',sans-serif] text-[11px] text-[#444]">
      <Header />
      <Ribbon />
      <FormulaRow />
      <main className="grid flex-1 grid-cols-2">
        <EstimatePanel />
        <ViewportPanel />
      </main>
    </div>
  );
}
